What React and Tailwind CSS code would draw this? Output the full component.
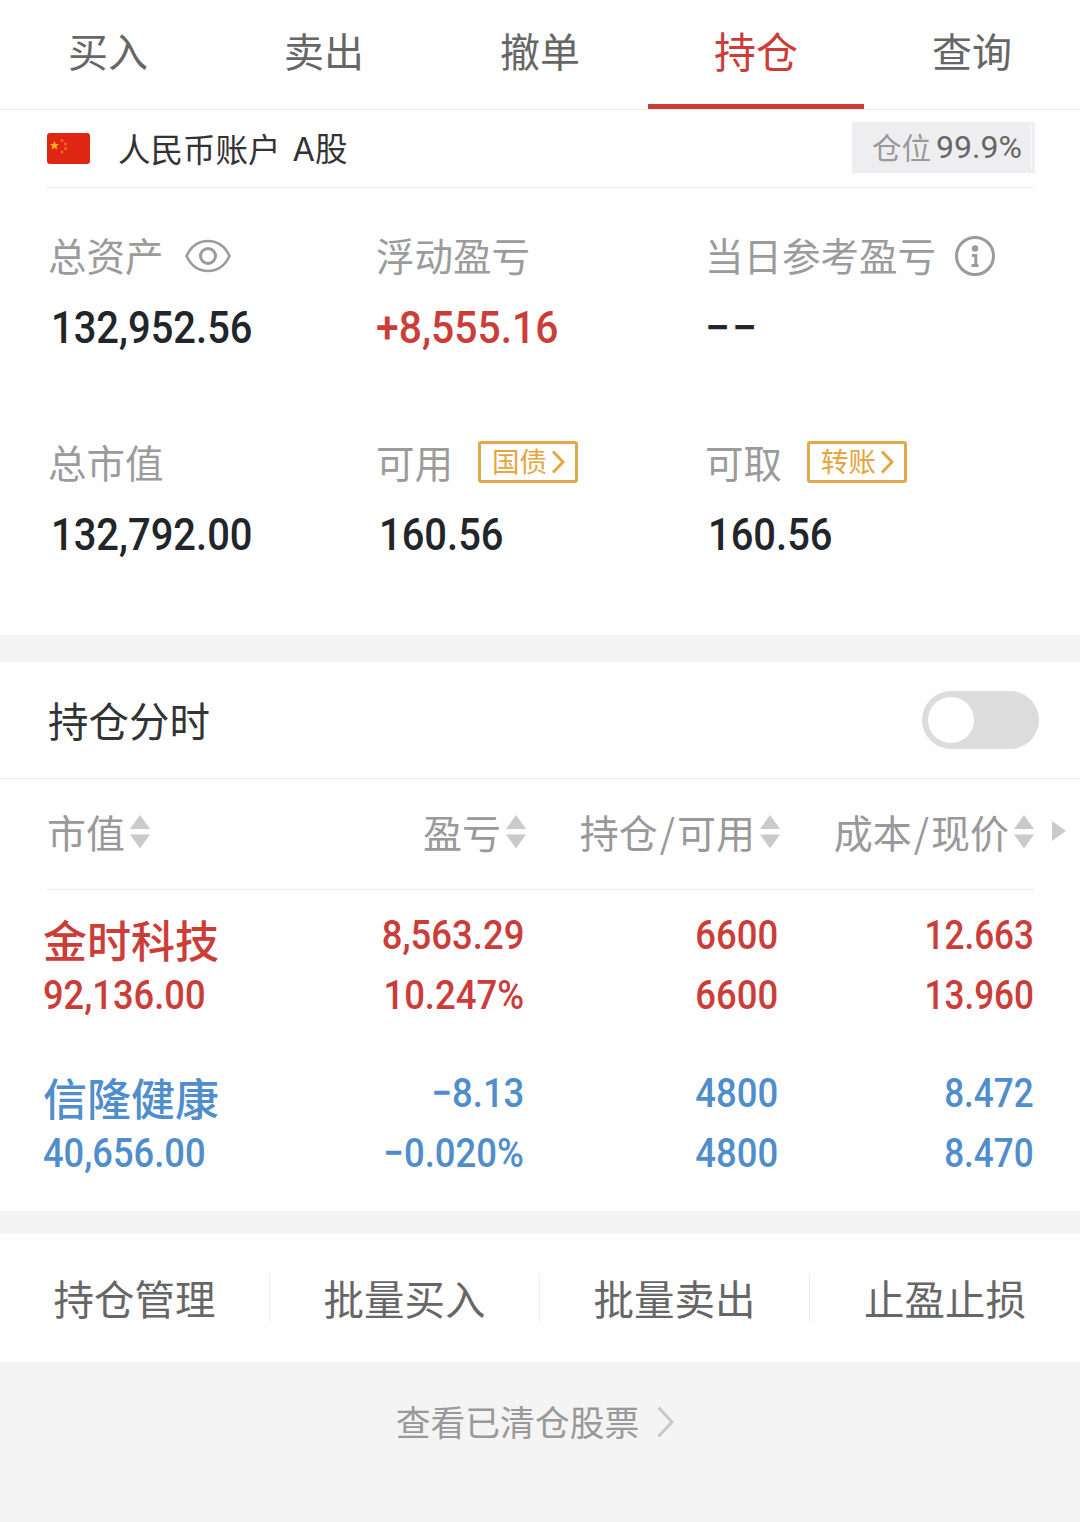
const tabs = ['买入', '卖出', '撤单', '持仓', '查询'];

const columns = [
  ['持仓', '可用'],
  ['成本', '现价'],
];

const holdings = [
  {
    name: '金时科技',
    value: '92,136.00',
    color: 'text-[#cb3d39]',
    cells: [
      ['8,563.29', '10.247%'],
      ['6600', '6600'],
      ['12.663', '13.960'],
    ],
  },
  {
    name: '信隆健康',
    value: '40,656.00',
    color: 'text-[#4f8dcb]',
    cells: [
      ['−8.13', '−0.020%'],
      ['4800', '4800'],
      ['8.472', '8.470'],
    ],
  },
];

const cellStyles = [
  'pr-[2px] [&_span]:scale-x-[0.89]',
  'pr-[2px] [&_span]:scale-x-[0.89]',
  '[&_span]:scale-x-[0.855]',
];

const actions = ['持仓管理', '批量买入', '批量卖出', '止盈止损'];

function SortIcon() {
  return (
    <svg className="w-5 h-[34px] ml-[5px] shrink-0" viewBox="0 0 20 34" fill="#cacaca">
      <path d="M10 0L20 14H0Z" />
      <path d="M0 19.5H20L10 33.5Z" />
    </svg>
  );
}

function Flag() {
  return (
    <svg className="w-[43px] h-[31px]" viewBox="0 0 43 31">
      <rect width="43" height="31" rx="3" fill="#de2612" />
      <path d="M7.5 8l1.300 3 3.200.2-2.500 2.100.8 3.200-2.800-1.700-2.800 1.700.8-3.200-2.500-2.100 3.200-.2z" fill="#fbb41c" />
      <g fill="#ee6a1c">
        <circle cx="15" cy="7.5" r="1.500" />
        <circle cx="18.5" cy="11" r="1.500" />
        <circle cx="18.5" cy="15.5" r="1.500" />
        <circle cx="15" cy="19" r="1.500" />
      </g>
    </svg>
  );
}

function EyeIcon() {
  return (
    <svg className="w-[46px] h-[34px] ml-[21px] mt-[2px]" viewBox="0 0 46 34" fill="none" stroke="#9b9b9b">
      <path d="M1.500 17C6 7.500 14 2 23 2s17 5.500 21.500 15C40 26.500 32 32 23 32S6 26.500 1.500 17Z" strokeWidth="2.600" />
      <circle cx="23" cy="17" r="7.500" strokeWidth="3" />
    </svg>
  );
}

function InfoIcon() {
  return (
    <svg className="w-10 h-10 ml-[19px] mt-[2px]" viewBox="0 0 40 40">
      <circle cx="20" cy="20" r="18.500" fill="none" stroke="#9b9b9b" strokeWidth="3" />
      <circle cx="20" cy="12.500" r="3.200" fill="#9b9b9b" />
      <path d="M17 19.500H20.800V29.500M16.500 29.500H23.500" fill="none" stroke="#9b9b9b" strokeWidth="3" />
    </svg>
  );
}

function Tag({ children }) {
  return (
    <span className="flex items-center w-[100px] h-[42px] ml-[25px] pl-[11px] border-3 border-[#e0a94b] rounded-[3px] text-[27.5px] text-[#e5a540]">
      <span className="-mt-[2px]">{children}</span>
      <svg className="w-[14px] h-6 ml-[4px]" viewBox="0 0 14 24" fill="none" stroke="#e5a540" strokeWidth="3">
        <path d="M2 1.500L12 12L2 22.500" />
      </svg>
    </span>
  );
}

function Asset({
  label,
  extra,
  value,
  color = 'text-[#22252a]',
  valueStyle = 'ml-[3px] scale-x-[0.887]',
}) {
  return (
    <div>
      <div className="flex items-center h-11 text-[38.5px] text-[#9b9b9b] whitespace-nowrap">
        <span className="-mt-[2px]">{label}</span>
        {extra}
      </div>
      <div className={`mt-[29px] h-11 leading-11 font-[Roboto] font-medium text-[45px] ${color}`}>
        <span className={`inline-block origin-left ${valueStyle}`}>{value}</span>
      </div>
    </div>
  );
}

export default function App() {
  return (
    <div className="w-[1080px] h-[1522px] overflow-hidden bg-[#f4f4f4] font-['Noto_Sans_CJK_SC',sans-serif] leading-none">
      <nav className="grid grid-cols-5 h-[110px] bg-[#fefefe] border-b border-[#ededed]">
        {tabs.map((tab) => (
          <div
            key={tab}
            className={
              tab === '持仓'
                ? 'flex justify-center pt-[29px] text-[42px] text-[#cb3d39] border-b-5 border-[#cb3d39]'
                : 'flex justify-center pt-[30px] text-[40px] text-[#666666]'
            }
          >
            {tab}
          </div>
        ))}
      </nav>

      <section className="h-[525px] bg-[#fefefe] pl-[47px] pr-[46px]">
        <div className="flex items-center h-[78px] border-b border-[#ededed]">
          <Flag />
          <span className="ml-[28px] text-[32.5px] text-[#333333]">人民币账户</span>
          <span className="ml-[12px] text-[32.5px] text-[#333333]">
            <span className="font-[Inter]">A</span>股
          </span>
          <div className="flex items-center ml-auto -mr-[1px] -mt-[2px] w-[183px] h-[51px] pl-5 bg-[#eeeef0] text-[#999999]">
            <span className="-mt-[2px] text-[29.5px]">仓位</span>
            <span className="ml-[5px] -mt-[2px] font-[Roboto] text-[32px] text-[#666666]">99.9%</span>
            <span className="ml-auto mr-[3px] w-px h-[45px] bg-[#fafafa]" />
          </div>
        </div>
        <div className="grid grid-cols-[328px_329px_1fr] gap-y-[90px] pt-[45px] pl-[1px]">
          <Asset label="总资产" extra={<EyeIcon />} value="132,952.56" />
          <Asset
            label="浮动盈亏"
            value="+8,555.16"
            color="text-[#cb3d39]"
            valueStyle="scale-x-[0.908]"
          />
          <Asset
            label="当日参考盈亏"
            extra={<InfoIcon />}
            value="−−"
            valueStyle="tracking-[2px] scale-x-[0.99]"
          />
          <Asset label="总市值" value="132,792.00" />
          <Asset label="可用" extra={<Tag>国债</Tag>} value="160.56" />
          <Asset label="可取" extra={<Tag>转账</Tag>} value="160.56" />
        </div>
      </section>

      <section className="mt-[27px] h-[549px] bg-[#fefefe]">
        <div className="flex items-center justify-between h-[117px] pl-12 pr-[41px] border-b border-[#ededed]">
          <span className="text-[40.5px] text-[#333333]">持仓分时</span>
          <div className="flex items-center w-[117px] h-[58px] pl-[6px] rounded-full bg-[#dcdcdc]">
            <div className="w-[46px] h-[46px] rounded-full bg-white" />
          </div>
        </div>

        <div className="relative grid grid-cols-[1fr_254px_254px] h-[111px] ml-[47px] mr-[46px] border-b border-[#ededed] text-[39px] text-[#999999]">
          <div className="flex items-center justify-between h-[106px]">
            <div className="flex items-center">
              <span className="-mt-[2px]">市值</span>
              <SortIcon />
            </div>
            <div className="flex items-center">
              <span className="-mt-[2px]">盈亏</span>
              <SortIcon />
            </div>
          </div>
          {columns.map(([first, second]) => (
            <div key={first} className="flex items-center justify-end h-[106px] whitespace-nowrap">
              <span className="-mt-[2px]">
                {first}
                <span className="mx-[2px]">/</span>
                {second}
              </span>
              <SortIcon />
            </div>
          ))}
          <svg className="absolute -right-8 top-[42px] w-[14px] h-5" viewBox="0 0 14 20" fill="#cacaca">
            <path d="M0 0L14 10L0 20Z" />
          </svg>
        </div>

        {holdings.map((item) => (
          <div
            key={item.name}
            className={`grid grid-cols-[229px_254px_254px_254px] h-[158px] pt-[15px] pl-[43px] ${item.color}`}
          >
            <div>
              <div className="h-[60px] pt-[12px] text-[44px] font-medium">{item.name}</div>
              <div className="h-[60px] leading-[60px] font-[Roboto] font-medium text-[41px]">
                <span className="inline-block origin-left scale-x-[0.885]">{item.value}</span>
              </div>
            </div>
            {item.cells.map((cell, i) => (
              <div
                key={i}
                className={`font-[Roboto] font-medium text-[41px] leading-[60px] text-right ${cellStyles[i]}`}
              >
                {cell.map((text, j) => (
                  <div key={j}>
                    <span className="inline-block origin-right">{text}</span>
                  </div>
                ))}
              </div>
            ))}
          </div>
        ))}
      </section>

      <section className="grid grid-cols-4 items-center mt-[23px] h-32 bg-[#fefefe] text-[40.5px] text-[#666666]">
        {actions.map((action) => (
          <div
            key={action}
            className="flex items-center justify-center h-12 border-r border-[#ededed] last:border-r-0"
          >
            {action}
          </div>
        ))}
      </section>

      <div className="flex items-center justify-center h-[120px] pr-[10px] text-[34.8px] text-[#999999]">
        <span className="-mt-[2px]">查看已清仓股票</span>
        <svg className="ml-[18px] w-[17px] h-8" viewBox="0 0 17 32" fill="none" stroke="#c8c8c8" strokeWidth="3">
          <path d="M1.500 1.500L15 16L1.500 30.500" />
        </svg>
      </div>
    </div>
  );
}
